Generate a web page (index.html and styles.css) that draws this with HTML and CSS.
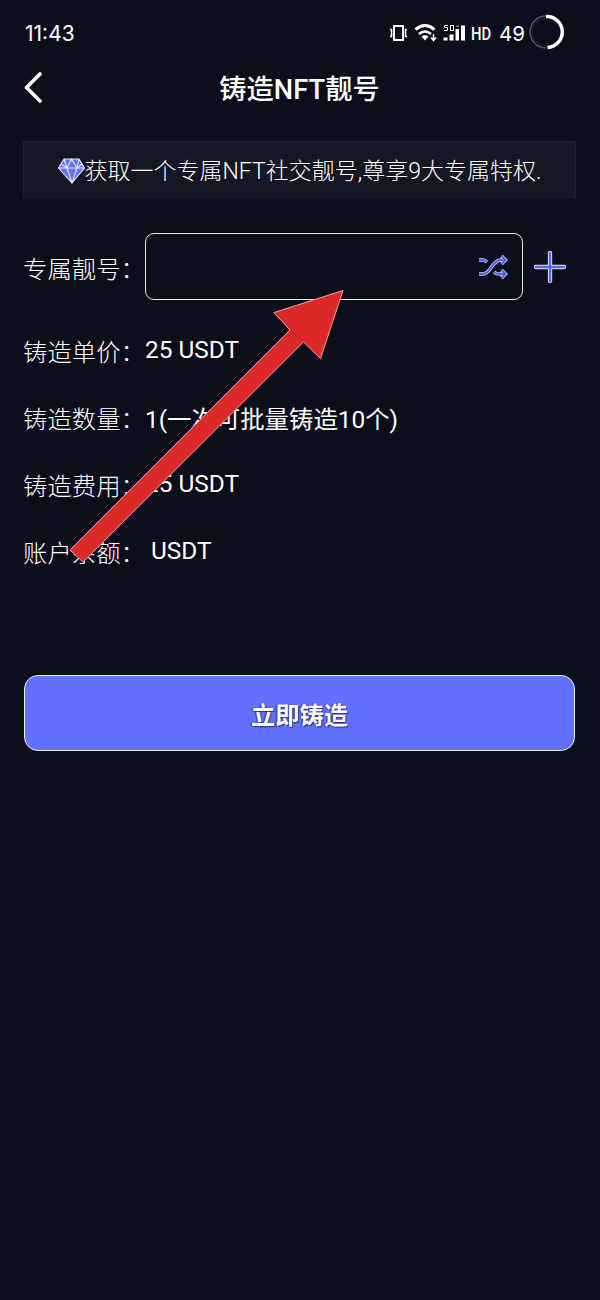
FILE: index.html
```html
<!DOCTYPE html>
<html lang="zh-CN">
<head>
<meta charset="utf-8">
<title>铸造NFT靓号</title>
<link rel="stylesheet" href="styles.css">
</head>
<body>
<div class="screen">
  <div class="status">
    <span class="time">11:43</span>
    <div class="indicators">
      <svg class="vibrate" width="20" height="18" viewBox="0 0 20 18" fill="none" stroke="#fff"><rect x="5" y="2" width="9" height="14" stroke-width="2"/><path d="M1 5.500h1.500v7H1M18 5.500h-1.500v7H18" stroke-width="1.500"/></svg>
      <svg class="wifi" width="24" height="20" viewBox="0 0 24 20" fill="none" stroke="#fff"><path d="M1.500 6.500Q11 -1.500 20.500 6.500" stroke-width="3"/><path d="M5 11Q11 6 17 11" stroke-width="2.600"/><path d="M7.500 13.500Q11 11 14.500 13.500L11 17.500z" fill="#fff" stroke="none"/><path d="M19.500 11v6M17 14.500l2.500 3 2.500-3" stroke-width="1.500"/></svg>
      <svg class="signal" width="24" height="20" viewBox="0 0 24 20"><path d="M1.500 14.500h4v3h-4zM7.500 11.500h4v6h-4zM13.500 6h3.500v11.500h-3.500zM19 2.500h4v15h-4z" fill="#fff"/><path d="M6 2.500H2.500v2h3v3H2M8.500 2.500h3v5h-3zM14.500 3.200h2" fill="none" stroke="#fff"/></svg>
      <span class="hd">HD</span>
      <span class="level">49</span>
      <svg class="ring" width="36" height="36" viewBox="0 0 36 36" fill="none"><path d="M17 2a16 16 0 0 0 0 32" stroke="#55565f" stroke-width="1.500"/><path d="M17 4a14 14 0 0 0 0 28" stroke="#292a33"/><path d="M17 2.500a15.500 15.500 0 0 1 1.500 31" stroke="#fff" stroke-width="3.500"/></svg>
    </div>
  </div>
  <header class="nav">
    <svg class="back" width="20" height="32" viewBox="0 0 20 32"><path d="M17 3L3.500 16.500 17 30" fill="none" stroke="#fff" stroke-width="3.600" stroke-linecap="round" stroke-linejoin="round"/></svg>
    <h1>铸造NFT靓号</h1>
  </header>
  <div class="notice">
    <svg class="gem" width="27" height="26" viewBox="0 0 27 26"><path d="M6 1h15l5.500 9L14 25 .5 10z" fill="#6472ff"/><path d="M6 1h15l5.500 9L14 25 .5 10zM.5 10h26M6 1l3 9 5 15 5-15 2-9M9 10l4.500-9L19 10M3 6l6 4M24 6l-5 4" fill="none" stroke="#e6e7f8" stroke-width="1.100"/></svg>
    <span>获取一个专属NFT社交靓号,尊享9大专属特权.</span>
  </div>
  <main class="form">
    <div class="row entry">
      <span class="label">专属靓号：</span>
      <div class="field">
        <svg width="30" height="26" viewBox="0 0 30 26" fill="none"><g stroke="#d3d6fa" stroke-width="3.400"><path d="M1 20h4c8 0 9-14 18-14h4M23.500 2L27.500 6l-4 4M1 6h4c2 0 3 1 4 2M16 18c2 2 3 2 6 2h5M23.500 16l4 4-4 4"/></g><g stroke="#5262e6" stroke-width="2"><path d="M1 20h4c8 0 9-14 18-14h4M23.500 2L27.500 6l-4 4M1 6h4c2 0 3 1 4 2M16 18c2 2 3 2 6 2h5M23.500 16l4 4-4 4"/></g></svg>
      </div>
      <svg class="plus" width="34" height="34" viewBox="0 0 34 34" stroke-linecap="round"><path d="M17 3v28M3 17h28" stroke="#e0e2ff" stroke-width="4.300"/><path d="M17 3v28M3 17h28" stroke="#5868ef" stroke-width="2.400"/></svg>
    </div>
    <div class="row"><span class="label">铸造单价：</span><span class="value">25 USDT</span></div>
    <div class="row"><span class="label">铸造数量：</span><span class="value quantity">1(一次可批量铸造10个)</span></div>
    <div class="row"><span class="label">铸造费用：</span><span class="value">25 USDT</span></div>
    <div class="row"><span class="label">账户余额：</span><span class="value balance">USDT</span></div>
  </main>
  <button class="mint">立即铸造</button>
  <svg class="pointer" width="280" height="300" viewBox="0 0 280 300"><path d="M274 19.500L205 41.500 221 59 1 279 14 291 234.500 71 251.500 87.500z" fill="#de292b" stroke="#f0a29e" stroke-width="1"/><path d="M221 59L234.500 71" stroke="#b9252b"/></svg>
</div>
</body>
</html>
```
FILE: styles.css
```css
* { box-sizing: border-box; }
body { margin: 0; background: #0d0e1b; color: #fff; font-family: Roboto, "Noto Sans CJK SC", sans-serif; }
.screen { position: relative; height: 1300px; overflow: hidden; padding: 0 24px 0 23px; display: flex; flex-direction: column; }
.status { height: 64px; display: flex; align-items: center; justify-content: space-between; padding: 2px 11px 0 2px; }
.time { font: 21px Inter, sans-serif; }
.indicators { display: flex; align-items: center; }
.wifi { margin-left: 5px; }
.signal { margin-left: 4px; }
.hd { font: 500 19px Roboto, sans-serif; width: 21px; margin: 0 7px 0 5px; transform: scaleX(.78); transform-origin: left; }
.level { font: 20.500px Inter, sans-serif; width: 25px; }
.ring { margin-left: 5px; margin-top: -2px; }
.nav { height: 48px; display: grid; grid-template-columns: 20px 1fr 20px; align-items: center; }
.back { margin-top: -2px; }
h1 { margin: 3px 0 0; text-align: center; font-size: 27.300px; font-weight: 500; line-height: 40px; }
.notice { height: 57px; margin-top: 29px; border: 1px solid #1d1f2d; background: #151725; display: flex; align-items: center; justify-content: center; font-size: 23px; font-weight: 300; white-space: nowrap; }
.notice span { line-height: 34px; margin-top: 4px; }
.gem { margin-top: 2px; }
.form { margin-top: 35px; }
.row { height: 67px; display: flex; align-items: center; }
.entry { margin-bottom: 16px; }
.label { width: 122px; flex: none; font: 300 24.400px/36px "Noto Sans CJK SC", sans-serif; white-space: nowrap; padding-top: 2px; }
.value { font-size: 24.400px; line-height: 36px; white-space: nowrap; padding-top: 1px; }
.quantity { padding-top: 6px; }
.balance { padding-left: 6px; }
.field { width: 378px; height: 67px; border: 1px solid #e9e7d8; border-radius: 9px; display: flex; align-items: center; justify-content: flex-end; padding-right: 14px; }
.plus { margin-left: 10px; }
.mint { margin: 91px 0 0 1px; height: 76px; width: 551px; flex: none; padding: 2px 0 0; border: 1px solid #eeefff; border-radius: 14px; background: #6070ff; color: #fff; font: 700 24.200px/36px "Noto Sans CJK SC", sans-serif; text-shadow: 1px 1px 1px #293084, -1px 0 1px #293084; }
.pointer { position: absolute; left: 69px; top: 271px; pointer-events: none; }
```
